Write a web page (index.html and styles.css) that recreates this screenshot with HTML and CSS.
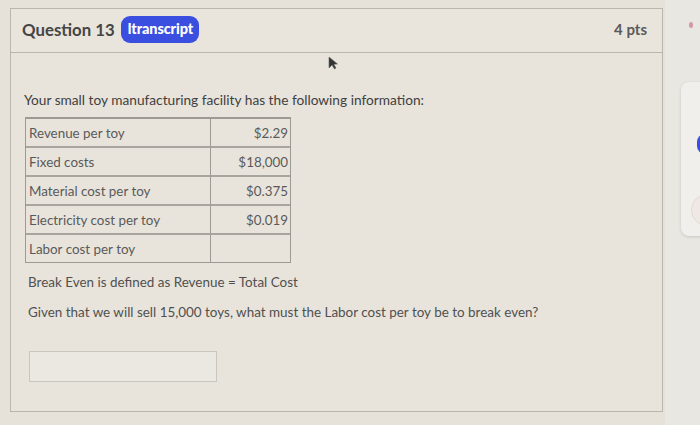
FILE: index.html
```html
<!DOCTYPE html>
<html>
<head>
<meta charset="utf-8">
<link rel="stylesheet" href="styles.css">
</head>
<body>
<div class="page">
  <div class="card">
    <div class="header">
      <div class="title">
        <span class="qname">Question 13</span>
        <span class="badge">ltranscript</span>
      </div>
      <span class="pts">4 pts</span>
    </div>
    <div class="body">
      <p class="intro">Your small toy manufacturing facility has the following information:</p>
      <table class="data">
        <tr><td>Revenue per toy</td><td class="num">$2.29</td></tr>
        <tr><td>Fixed costs</td><td class="num">$18,000</td></tr>
        <tr><td>Material cost per toy</td><td class="num">$0.375</td></tr>
        <tr><td>Electricity cost per toy</td><td class="num">$0.019</td></tr>
        <tr><td>Labor cost per toy</td><td class="num"></td></tr>
      </table>
      <p class="line1">Break Even is defined as Revenue = Total Cost</p>
      <p class="line2">Given that we will sell 15,000 toys, what must the Labor cost per toy be to break even?</p>
      <div class="answer"></div>
    </div>
  </div>
  <div class="side">
    <div class="dot-pink"></div>
    <div class="panel">
      <div class="dot-blue"></div>
      <div class="circle"></div>
    </div>
  </div>
  <svg class="cursor" width="12" height="14" viewBox="0 0 12 14"><path d="M2 1 L2 12 L5 9 L7.5 13 L9 12 L6.8 8.3 L10.5 8 Z" fill="#333" stroke="#666" stroke-width="0.6"/></svg>
</div>
</body>
</html>
```

FILE: styles.css
```css
html, body {
  margin: 0;
  padding: 0;
}
body {
  width: 700px;
  height: 425px;
  overflow: hidden;
  background: #e6e2d9;
  font-family: Lato, "Open Sans", sans-serif;
  color: #4f4f4f;
}
.page {
  position: relative;
  display: flex;
  padding: 8px 0 0 10px;
  height: 417px;
}
.card {
  width: 651px;
  height: 402px;
  border: 1px solid #b9b6ae;
  background: #e8e4db;
  display: flex;
  flex-direction: column;
}
.header {
  height: 40px;
  padding: 0 15px 3px 11px;
  border-bottom: 1px solid #b9b6ae;
  display: flex;
  align-items: center;
  justify-content: space-between;
  background: #e9e5dc;
}
.title {
  display: flex;
  align-items: center;
  gap: 6px;
}
.qname {
  font-size: 16.8px;
  font-weight: 700;
  color: #454545;
}
.badge {
  background: #3a4fe0;
  color: #fff;
  font-weight: 900;
  font-size: 14.5px;
  height: 27px;
  line-height: 26px;
  padding: 0 6px 0 7px;
  border-radius: 9px;
  letter-spacing: -0.1px;
}
.pts {
  font-size: 15px;
  font-weight: 700;
  color: #5a5a5a;
  margin-top: -1px;
}
.body {
  padding: 0 0 0 13px;
}
.intro {
  margin: 38px 0 9px 0;
  font-size: 13.7px;
  color: #404040;
}
.data {
  border-collapse: separate;
  border-spacing: 0;
  border: 1px solid #9d9a93;
  border-top: 2px solid #9d9a93;
  margin-left: 1px;
  font-size: 13.4px;
  color: #5a5a5a;
}
.data td {
  height: 27px;
  padding: 0 3px;
  border-right: 1px solid #9d9a93;
  border-bottom: 2px solid #a8a59e;
  vertical-align: middle;
}
.data tr:last-child td {
  border-bottom: none;
}
.data td:first-child {
  width: 177px;
  padding-right: 4px;
}
.data td.num {
  width: 74px;
  text-align: right;
  border-right: none;
  padding-right: 2px;
}
.line1 {
  margin: 11px 0 0 4px;
  font-size: 13.45px;
  color: #505050;
}
.line2 {
  margin: 14px 0 0 4px;
  font-size: 13.45px;
  color: #505050;
}
.answer {
  margin: 31px 0 0 5px;
  width: 186px;
  height: 29px;
  border: 1px solid #c9c6bf;
  background: #ebe8e1;
}
.side {
  position: relative;
  flex: 1;
  margin-left: 2px;
  margin-top: -8px;
  background: #e9e7e2;
}
.dot-pink {
  position: absolute;
  left: 24px;
  top: 22px;
  width: 4px;
  height: 6px;
  border-radius: 2px;
  background: #d29aa8;
}
.panel {
  position: absolute;
  left: 16px;
  top: 82px;
  width: 30px;
  height: 154px;
  background: #f0efeb;
  border-radius: 8px;
  box-shadow: 0 1px 3px rgba(0,0,0,0.15);
  overflow: hidden;
}
.dot-blue {
  position: absolute;
  left: 16px;
  top: 52px;
  width: 14px;
  height: 20px;
  border-radius: 8px 0 0 8px;
  background: #3a4fe0;
}
.circle {
  position: absolute;
  left: 10px;
  top: 112px;
  width: 30px;
  height: 30px;
  border-radius: 50%;
  border: 1px solid #e3d7d2;
  background: #efe9e6;
}
.cursor {
  position: absolute;
  left: 327px;
  top: 56px;
}
```
